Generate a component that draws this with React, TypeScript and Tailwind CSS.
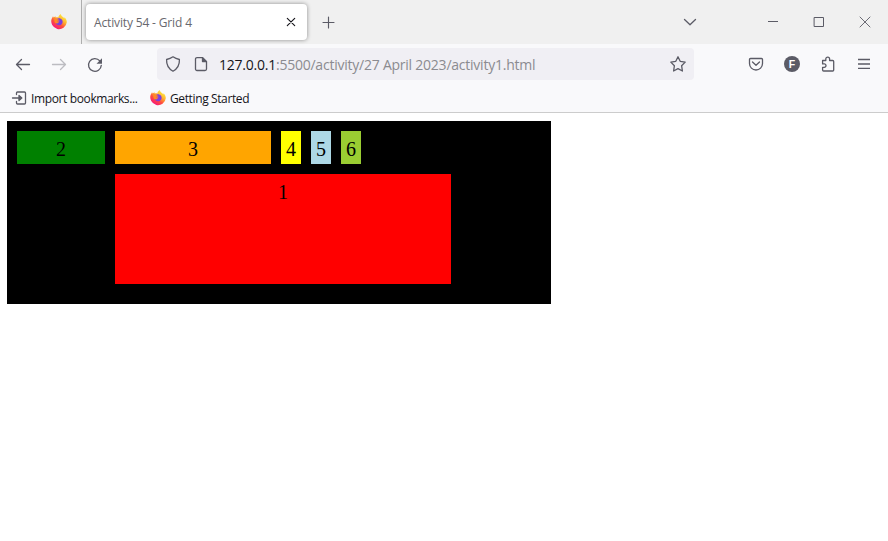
import type { ReactNode } from 'react';

function Icon({ children, className = '' }: { children: ReactNode; className?: string }) {
  return (
    <svg
      viewBox="0 0 16 16"
      className={`h-4 w-4 shrink-0 ${className}`}
      fill="none"
      stroke="currentColor"
      strokeWidth="1.3"
      strokeLinecap="round"
      strokeLinejoin="round"
    >
      {children}
    </svg>
  );
}

function Firefox({ id, className = '' }: { id: string; className?: string }) {
  return (
    <svg viewBox="0 0 16 16" className={`h-4 w-4 shrink-0 ${className}`}>
      <defs>
        <linearGradient id={id} x1="0.85" y1="0.1" x2="0.25" y2="0.95">
          <stop offset="0" stopColor="#fff044" />
          <stop offset="0.35" stopColor="#ffb52e" />
          <stop offset="0.65" stopColor="#ff4f3c" />
          <stop offset="1" stopColor="#f5157d" />
        </linearGradient>
      </defs>
      <path
        fill={`url(#${id})`}
        d="M9.8 0c.2 1.5 1.2 2.2 2.2 3 .7.6 1 .9 1.2 1.4l.4-1.2c1.6 1.8 2.2 3.4 2.2 5A7.8 7.8 0 1 1 .7 4.7L2 2.3l.7 1.2 1.7-1.3.3 1.4c1-.4 2-.4 2.8-.1C7.400 2 8.300.8 9.800 0Z"
      />
      <path fill="#7a3fe0" d="M5.200 6.300c.8-1.800 2.400-2.200 3.900-1.900 1.800.5 2.800 2 2.500 3.800-.3 2-1.800 3.100-3.600 3.100-2 0-3.500-1.500-3.400-3.300l3.200-.2.900-1Z" />
      <path fill="#ff8a24" d="M3 4.400c1.700-.6 2.500.5 4.900 1.200-.1.900-1.200 1.100-1.900 1.500-.2.900.8 1.500 2.200 1-1 1.800-3.500 1.600-4.600.1Z" />
    </svg>
  );
}

function TabStrip() {
  return (
    <div className="flex h-11 items-center bg-[#f0f0f0] text-[#5b5b66]">
      <div className="flex h-full w-[82px] shrink-0 items-center border-r border-[#aeaeae] pl-[51px]">
        <Firefox id="pinned" />
      </div>
      <div className="ml-1 flex h-9 w-[221px] shrink-0 items-center rounded bg-white pl-2 shadow-[0_0_4px_rgba(0,0,0,0.42)]">
        <span className="w-[180px] whitespace-nowrap pt-[2px] text-[12px] tracking-[-0.15px] text-[#68686e]">Activity 54 - Grid 4</span>
        <Icon className="ml-[9px] text-[#15141a]">
          <path d="m4.300 4.300 7.400 7.400M11.700 4.300l-7.400 7.400" strokeWidth="1.15" />
        </Icon>
      </div>
      <Icon className="ml-[13px]">
        <path d="M8.500 3v11M3 8.500h11" strokeWidth="1.150" />
      </Icon>
      <Icon className="ml-[346px]">
        <path d="m2.500 5.500 5.500 5.200 5.500-5.200" />
      </Icon>
      <Icon className="ml-[67px]">
        <path d="M3 7.500h10" strokeWidth="1" strokeLinecap="butt" />
      </Icon>
      <Icon className="ml-[30px]">
        <path d="M3.500 3.500h9v9h-9z" strokeWidth="1" strokeLinejoin="miter" />
      </Icon>
      <Icon className="ml-[30px]">
        <path d="m3 3 10 10M13 3 3 13" strokeWidth="0.9" />
      </Icon>
    </div>
  );
}

function NavBar() {
  return (
    <div className="flex h-10 items-center text-[#5b5b66]">
      <Icon className="ml-[15px]">
        <path d="M1.500 8.500h13M6.500 3.500l-5 5 5 5" />
      </Icon>
      <Icon className="ml-5 text-[#bcbcc1]">
        <path d="M1.500 8.500h13M9.500 3.500l5 5-5 5" />
      </Icon>
      <Icon className="ml-5 mt-px">
        <path d="M12.800 3.800A6.400 6.400 0 1 0 14.300 8.300" />
        <path d="M15 1.200v5.500H9.500Z" fill="currentColor" stroke="none" />
      </Icon>
      <div className="ml-[54px] flex h-8 w-[537px] shrink-0 items-center rounded bg-[#f0eff4]">
        <Icon className="ml-2">
          <path d="M8 .8c2.200 1.500 4.200 2.200 6.400 2.700.3 5.300-1.600 9-6.400 11.700C3.200 12.500 1.300 8.800 1.600 3.500 3.800 3 5.800 2.300 8 .8Z" />
        </Icon>
        <Icon className="ml-3">
          <path d="M4 1.600h5.500L13.500 5.600V13a1.500 1.500 0 0 1-1.500 1.500H4A1.500 1.500 0 0 1 2.500 13V3.100A1.500 1.500 0 0 1 4 1.600Z" />
          <path d="M9.500 1.600v4h4Z" fill="currentColor" />
        </Icon>
        <span className="ml-[10px] w-[441px] whitespace-nowrap pt-px text-[14px] tracking-[-0.235px] text-[#8b8b90]">
          <span className="text-[#15141a]">127.0.0.1</span>:5500/activity/27 April 2023/activity1.html
        </span>
        <Icon className="ml-[10px]">
          <path d="m8 .8 2.200 4.500 5 .8-3.600 3.600.8 5.300L8 12.600 3.600 15l.8-5.300L.8 6.100l5-.8Z" />
        </Icon>
      </div>
      <Icon className="ml-[54px]">
        <path d="M2.500 2.500h11a1 1 0 0 1 1 1V7.500a6.500 6.500 0 0 1-13 0v-4a1 1 0 0 1 1-1ZM4.500 6 8 9.300 11.500 6" />
      </Icon>
      <div className="ml-5 flex h-4 w-4 shrink-0 items-center justify-center rounded-full bg-[#5b5b66] font-['Liberation_Sans',sans-serif] text-[10.5px] font-bold leading-none text-white">
        F
      </div>
      <Icon className="ml-5">
        <path d="M2.600 4.500h3.200V3a1.900 1.900 0 0 1 3.800 0v1.500h3.100a1 1 0 0 1 1 1V14a1 1 0 0 1-1 1H3.600a1 1 0 0 1-1-1v-2.700h1.700a1.700 1.700 0 0 0 0-3.400H2.600Z" />
      </Icon>
      <Icon className="ml-5">
        <path d="M2 3.500h12M2 8h12M2 12.300h12" strokeLinecap="butt" />
      </Icon>
    </div>
  );
}

function BookmarksBar() {
  return (
    <div className="flex h-[29px] items-center border-b border-[#ccc] text-[12px] text-[#15141a]">
      <Icon className="ml-[11px] text-[#5b5b66]">
        <path d="M5.500 4.500V3a1 1 0 0 1 1-1h7a1 1 0 0 1 1 1v10a1 1 0 0 1-1 1h-7a1 1 0 0 1-1-1v-1.500M1.500 8H9" />
        <path d="M8 5.500 10.800 8 8 10.500Z" fill="currentColor" />
      </Icon>
      <span className="ml-1 w-[119px] whitespace-nowrap pt-[2px] tracking-[-0.37px]">Import bookmarks...</span>
      <Firefox id="bookmark" />
      <span className="ml-1 whitespace-nowrap pt-[2px] tracking-[-0.38px]">Getting Started</span>
    </div>
  );
}

export default function App() {
  return (
    <div className="h-[541px] w-[888px] overflow-hidden bg-white font-['Open_Sans','Noto_Sans',sans-serif]">
      <header className="bg-[#f9f9fb]">
        <TabStrip />
        <NavBar />
        <BookmarksBar />
      </header>
      <main className="pl-[7px] pt-2">
        <div className="grid h-[183px] w-[544px] grid-cols-[88px_156px_20px_20px_20px_80px] grid-rows-[33px_110px] gap-[10px] bg-black p-[10px] text-center font-['Liberation_Serif',serif] text-[20px] leading-[23px] text-black *:pt-[7px]">
          <div className="bg-[green]">2</div>
          <div className="bg-[orange]">3</div>
          <div className="bg-[yellow]">4</div>
          <div className="bg-[lightblue]">5</div>
          <div className="bg-[yellowgreen]">6</div>
          <div className="col-span-5 col-start-2 row-start-2 bg-[red]">1</div>
        </div>
      </main>
    </div>
  );
}
